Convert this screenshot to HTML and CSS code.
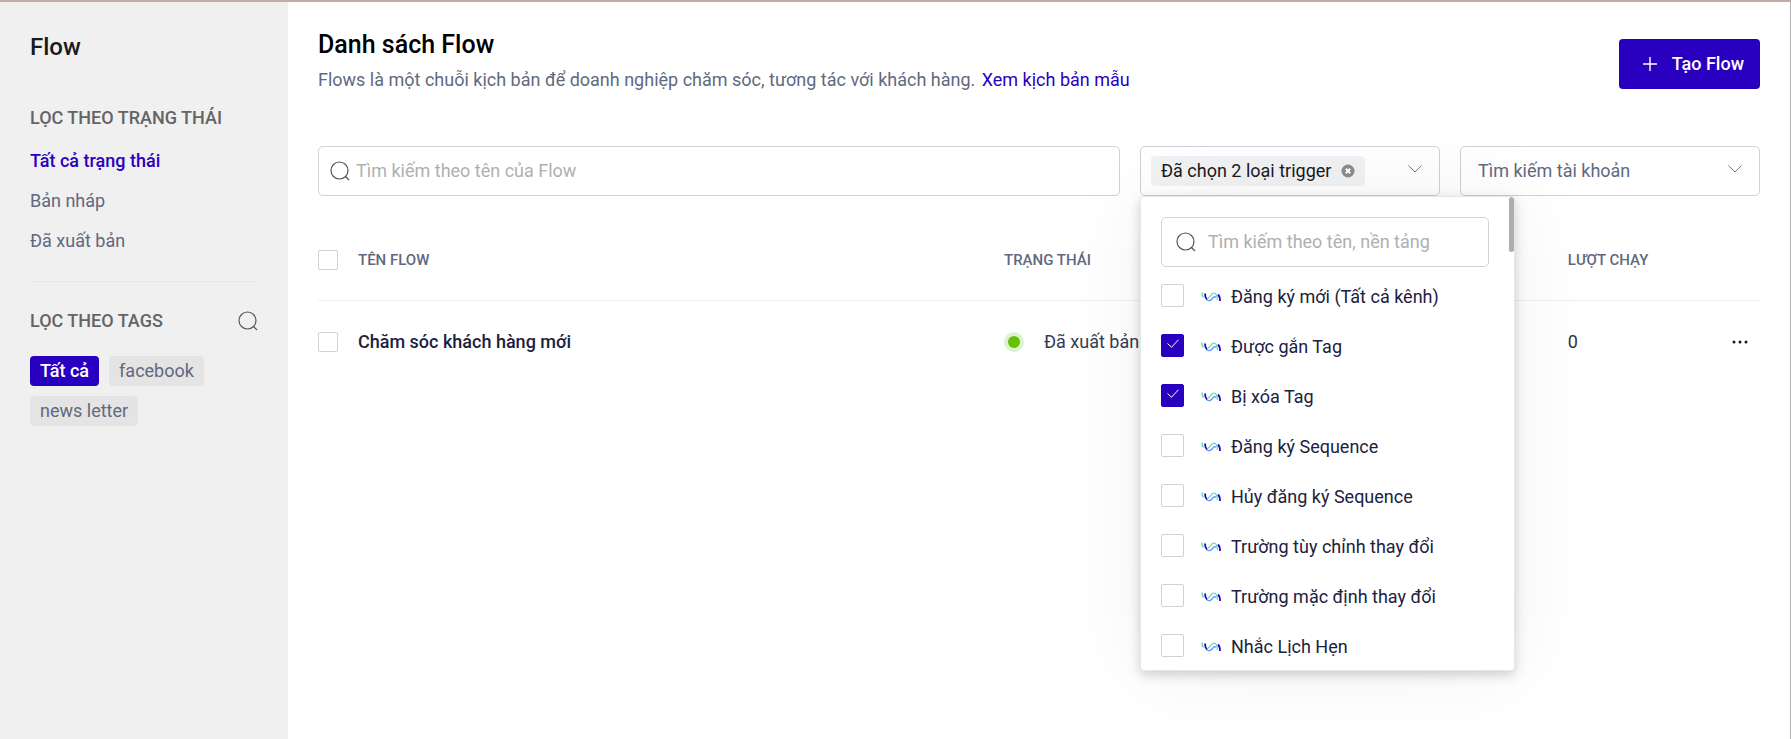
FILE: index.html
```html
<!DOCTYPE html>
<html lang="vi">
<head>
<meta charset="utf-8">
<meta name="viewport" content="width=device-width, initial-scale=1">
<title>Danh sách Flow</title>
<link rel="stylesheet" href="styles.css">
</head>
<body>
<svg class="defs" aria-hidden="true">
  <symbol id="i-search" viewBox="0 0 20 20"><circle cx="9.5" cy="9.5" r="8.5"/><path d="M15.5 15.5 L19 19"/></symbol>
  <symbol id="i-down" viewBox="0 0 14 8"><path d="M.5 .5 L7 7 L13.500 .5"/></symbol>
  <symbol id="i-check" viewBox="0 0 12 9"><path d="M.5 4.500 L4.500 8.300 L11.500 .7"/></symbol>
  <symbol id="i-wave" viewBox="0 0 20 12">
    <path d="M1 1.500 C1 4 1.500 5.500 2.500 6.500" stroke="#5fe0b4" stroke-width="1.500"/>
    <path d="M4 2.500 C4 5 4.500 7 6 8.500" stroke="#2a00c0" stroke-width="1.800"/>
    <path d="M6 8.700 C8 10.500 9.800 9.500 11.200 7.700 S13.500 4.800 15 6.500" stroke="#5a98fa" stroke-width="1.400"/>
    <path d="M7 6.800 C8.500 6.800 9.500 5 10.500 3.500 C12 1.500 14.300 1.800 15.300 3.800 C16 5.200 16.300 7 16.400 8.800" stroke="#5fe0b4" stroke-width="1.300"/>
    <path d="M17 3.500 C18.600 5 19 7 19 10" stroke="#2a00c0" stroke-width="1.800"/>
  </symbol>
</svg>
<div class="app">
  <aside class="sidebar">
    <h2 class="sidebar-title">Flow</h2>
    <h3 class="group-title">LỌC THEO TRẠNG THÁI</h3>
    <nav class="states">
      <a class="state state-active" href="#all">Tất cả trạng thái</a>
      <a class="state" href="#draft">Bản nháp</a>
      <a class="state" href="#published">Đã xuất bản</a>
    </nav>
    <div class="tags-head">
      <h3 class="group-title">LỌC THEO TAGS</h3>
      <button class="icon-btn" aria-label="Tìm tag"><svg class="icon-search"><use href="#i-search"/></svg></button>
    </div>
    <div class="tags">
      <button class="tag tag-active">Tất cả</button>
      <button class="tag">facebook</button>
      <button class="tag">news letter</button>
    </div>
  </aside>

  <main class="main">
    <header class="head">
      <div class="head-text">
        <h1 class="title">Danh sách Flow</h1>
        <p class="lead">Flows là một chuỗi kịch bản để doanh nghiệp chăm sóc, tương tác với khách hàng. <a class="lead-link" href="#sample">Xem kịch bản mẫu</a></p>
      </div>
      <button class="create"><svg class="icon-plus" viewBox="0 0 14 14"><path d="M7 0 V14 M0 7 H14"/></svg>Tạo Flow</button>
    </header>

    <div class="filters">
      <label class="field field-main">
        <svg class="icon-search"><use href="#i-search"/></svg>
        <input class="field-input" type="text" placeholder="Tìm kiếm theo tên của Flow" aria-label="Tìm kiếm theo tên của Flow">
      </label>
      <div class="picker">
        <div class="field trigger">
          <span class="chip">Đã chọn 2 loại trigger
            <button class="icon-btn" aria-label="Xóa lựa chọn"><svg class="icon-clear" viewBox="0 0 14 14"><circle cx="7" cy="7" r="6.500"/><path d="M4.800 4.800 L9.200 9.200 M9.200 4.800 L4.800 9.200"/></svg></button>
          </span>
          <button class="icon-btn" aria-label="Mở danh sách trigger"><svg class="icon-down"><use href="#i-down"/></svg></button>
        </div>
        <div class="menu">
          <label class="field menu-search">
            <svg class="icon-search"><use href="#i-search"/></svg>
            <input class="field-input" type="text" placeholder="Tìm kiếm theo tên, nền tảng" aria-label="Tìm kiếm theo tên, nền tảng">
          </label>
          <label class="option"><span class="check"><input class="box box-lg" type="checkbox"><svg class="tick"><use href="#i-check"/></svg></span><svg class="wave"><use href="#i-wave"/></svg>Đăng ký mới (Tất cả kênh)</label>
          <label class="option"><span class="check"><input class="box box-lg" type="checkbox" checked><svg class="tick"><use href="#i-check"/></svg></span><svg class="wave"><use href="#i-wave"/></svg>Được gắn Tag</label>
          <label class="option"><span class="check"><input class="box box-lg" type="checkbox" checked><svg class="tick"><use href="#i-check"/></svg></span><svg class="wave"><use href="#i-wave"/></svg>Bị xóa Tag</label>
          <label class="option"><span class="check"><input class="box box-lg" type="checkbox"><svg class="tick"><use href="#i-check"/></svg></span><svg class="wave"><use href="#i-wave"/></svg>Đăng ký Sequence</label>
          <label class="option"><span class="check"><input class="box box-lg" type="checkbox"><svg class="tick"><use href="#i-check"/></svg></span><svg class="wave"><use href="#i-wave"/></svg>Hủy đăng ký Sequence</label>
          <label class="option"><span class="check"><input class="box box-lg" type="checkbox"><svg class="tick"><use href="#i-check"/></svg></span><svg class="wave"><use href="#i-wave"/></svg>Trường tùy chỉnh thay đổi</label>
          <label class="option"><span class="check"><input class="box box-lg" type="checkbox"><svg class="tick"><use href="#i-check"/></svg></span><svg class="wave"><use href="#i-wave"/></svg>Trường mặc định thay đổi</label>
          <label class="option"><span class="check"><input class="box box-lg" type="checkbox"><svg class="tick"><use href="#i-check"/></svg></span><svg class="wave"><use href="#i-wave"/></svg>Nhắc Lịch Hẹn</label>
          <span class="thumb"></span>
        </div>
      </div>
      <div class="account">
        <select class="account-select" aria-label="Tìm kiếm tài khoản"><option>Tìm kiếm tài khoản</option></select>
        <svg class="icon-down"><use href="#i-down"/></svg>
      </div>
    </div>

    <table class="flows">
      <thead>
        <tr>
          <th class="col-check"><input class="box" type="checkbox" aria-label="Chọn tất cả"></th>
          <th class="col-name">TÊN FLOW</th>
          <th class="col-state">TRẠNG THÁI</th>
          <th>LƯỢT CHẠY</th>
          <th></th>
        </tr>
      </thead>
      <tbody>
        <tr>
          <td><input class="box" type="checkbox" aria-label="Chọn Chăm sóc khách hàng mới"></td>
          <td class="name">Chăm sóc khách hàng mới</td>
          <td><span class="status"><span class="dot"></span>Đã xuất bản</span></td>
          <td class="runs">0</td>
          <td class="actions"><button class="icon-btn" aria-label="Thao tác"><svg class="icon-more" viewBox="0 0 16 4"><circle cx="2" cy="2" r="1.500"/><circle cx="8" cy="2" r="1.500"/><circle cx="14" cy="2" r="1.500"/></svg></button></td>
        </tr>
      </tbody>
    </table>
  </main>
</div>
</body>
</html>
```

FILE: styles.css
```css
* { box-sizing: border-box; }

body {
  margin: 0;
  font: 400 18px/26px Roboto, "Noto Sans", sans-serif;
  color: #1b2140;
  background: #fff;
}

h1, h2, h3, p { margin: 0; }
a { text-decoration: none; }
svg { display: block; fill: none; flex: none; }
button, input, select { font: inherit; margin: 0; }
button { border: 0; padding: 0; background: none; cursor: pointer; }

.defs { position: absolute; width: 0; height: 0; }

.app {
  display: flex;
  min-height: 100vh;
  border-top: 2px solid #c4aba6;
  border-right: 1px solid #aeb1b8;
}

/* Sidebar */
.sidebar { flex: none; width: 288px; padding: 30px; background: #f0f0f0; }
.sidebar-title { font-size: 24px; font-weight: 500; line-height: 30px; color: #1a1a1a; }
.group-title { font-size: 18px; font-weight: 500; color: #646464; }
.sidebar > .group-title { margin-top: 43px; }
.states {
  display: flex;
  flex-direction: column;
  margin: 10px 0 26px;
  padding-bottom: 20px;
  border-bottom: 1px solid #e6e6e6;
}
.state { line-height: 40px; color: #5f6980; }
.state-active { font-weight: 500; color: #2a00c0; }
.tags-head { display: flex; justify-content: space-between; align-items: center; margin-bottom: 22px; }
.tags { display: flex; flex-wrap: wrap; gap: 10px; }
.tag { height: 30px; padding: 0 10px; border-radius: 4px; background: #e4e4e4; color: #5f6980; }
.tag-active { background: #2a00c0; color: #fff; font-weight: 500; }

/* Icons */
.icon-search { width: 20px; height: 20px; stroke: #555; stroke-width: 1.2; }
.icon-down { width: 14px; height: 8px; margin-bottom: 4px; stroke: #777; }
.icon-plus { width: 14px; height: 14px; stroke: #fff; stroke-width: 1.4; }
.icon-clear { width: 14px; height: 14px; stroke: #fff; stroke-width: 2; }
.icon-clear circle { fill: #8c8c8c; stroke: none; }
.icon-more { width: 16px; height: 4px; fill: #1a1a1a; }

/* Header */
.main { flex: 1; min-width: 0; padding: 27px 30px; }
.head { display: flex; justify-content: space-between; align-items: flex-end; }
.title { font-size: 25px; font-weight: 500; line-height: 32px; color: #000; }
.lead { margin-top: 6px; color: #5f6980; }
.lead-link { margin-left: 2px; color: #2a00c0; }
.create {
  display: flex;
  align-items: center;
  gap: 15px;
  height: 50px;
  margin-bottom: 4px;
  padding: 0 16px 0 24px;
  border-radius: 4px;
  background: #2a00c0;
  color: #fff;
  font-weight: 500;
}

/* Filters */
.filters { display: flex; gap: 20px; margin-top: 53px; }
.field {
  display: flex;
  align-items: center;
  height: 50px;
  border: 1px solid #cfd1da;
  border-radius: 5px;
}
.field-main { flex: 1; gap: 6px; padding: 0 11px; }
.field-input { flex: 1; min-width: 0; padding: 0; border: 0; outline: 0; background: none; }
.field-input::placeholder { color: #b0b0b0; opacity: 1; }
.picker { position: relative; flex: none; width: 300px; }
.trigger { justify-content: space-between; padding: 0 17px 0 10px; }
.chip {
  display: flex;
  align-items: center;
  gap: 10px;
  height: 30px;
  padding: 0 10px;
  border-radius: 4px;
  background: #f1f2f4;
  color: #1a1a1a;
}
.account { display: grid; flex: none; width: 300px; align-items: center; }
.account-select {
  grid-area: 1 / 1;
  width: 100%;
  height: 50px;
  padding: 0 17px;
  border: 1px solid #cfd1da;
  border-radius: 5px;
  appearance: none;
  background: none;
  color: #5f6980;
}
.account > .icon-down { grid-area: 1 / 1; justify-self: end; margin-right: 18px; pointer-events: none; }

/* Trigger menu */
.menu {
  position: absolute;
  top: 100%;
  left: 0;
  z-index: 2;
  width: 375px;
  max-height: 475px;
  padding: 20px 25px 0 20px;
  overflow: hidden;
  border: 1px solid #e6e7ea;
  border-radius: 4px;
  background: #fff;
  box-shadow: 0 4px 12px rgba(0, 0, 0, .18), 0 0 90px rgba(0, 0, 0, .06);
}
.menu-search { gap: 12px; margin-bottom: 5px; padding: 0 14px; }
.option { display: flex; align-items: center; height: 50px; }
.check { display: grid; place-items: center; margin: 0 17px 4px 0; }
.check > * { grid-area: 1 / 1; }
.tick { width: 12px; height: 9px; margin-bottom: 3px; stroke: #fff; stroke-width: 1; visibility: hidden; pointer-events: none; }
.box:checked + .tick { visibility: visible; }
.wave { width: 20px; height: 12px; margin-right: 10px; }
.thumb { position: absolute; top: 0; right: 0; width: 5px; height: 55px; border-radius: 3px; background: #aeaeae; }

/* Check boxes */
.box {
  display: block;
  width: 20px;
  height: 20px;
  border: 1px solid #cfd1da;
  border-radius: 2px;
  appearance: none;
  background: #fff;
}
.box-lg { width: 23px; height: 23px; }
.box:checked { border-color: #2a00c0; background: #2a00c0; }

/* Table */
.flows { width: 100%; margin-top: 24px; border-collapse: collapse; table-layout: fixed; }
.flows th, .flows td { height: 80px; padding: 0; text-align: left; vertical-align: middle; }
.flows td { height: 83px; }
.flows th { border-bottom: 1px solid #f0f0f0; font-size: 15px; font-weight: 500; color: #5f6980; }
.col-check { width: 40px; }
.col-name { width: 44.8%; }
.col-state { width: 39.1%; }
.name { font-weight: 500; }
.status { display: flex; align-items: center; gap: 20px; color: #343a55; }
.dot { width: 20px; height: 20px; border: 4px solid #dff2cf; border-radius: 50%; background: #63c100; }
.runs { color: #333; }
.flows .actions { padding-right: 12px; }
.actions .icon-btn { display: block; margin-left: auto; }
```
